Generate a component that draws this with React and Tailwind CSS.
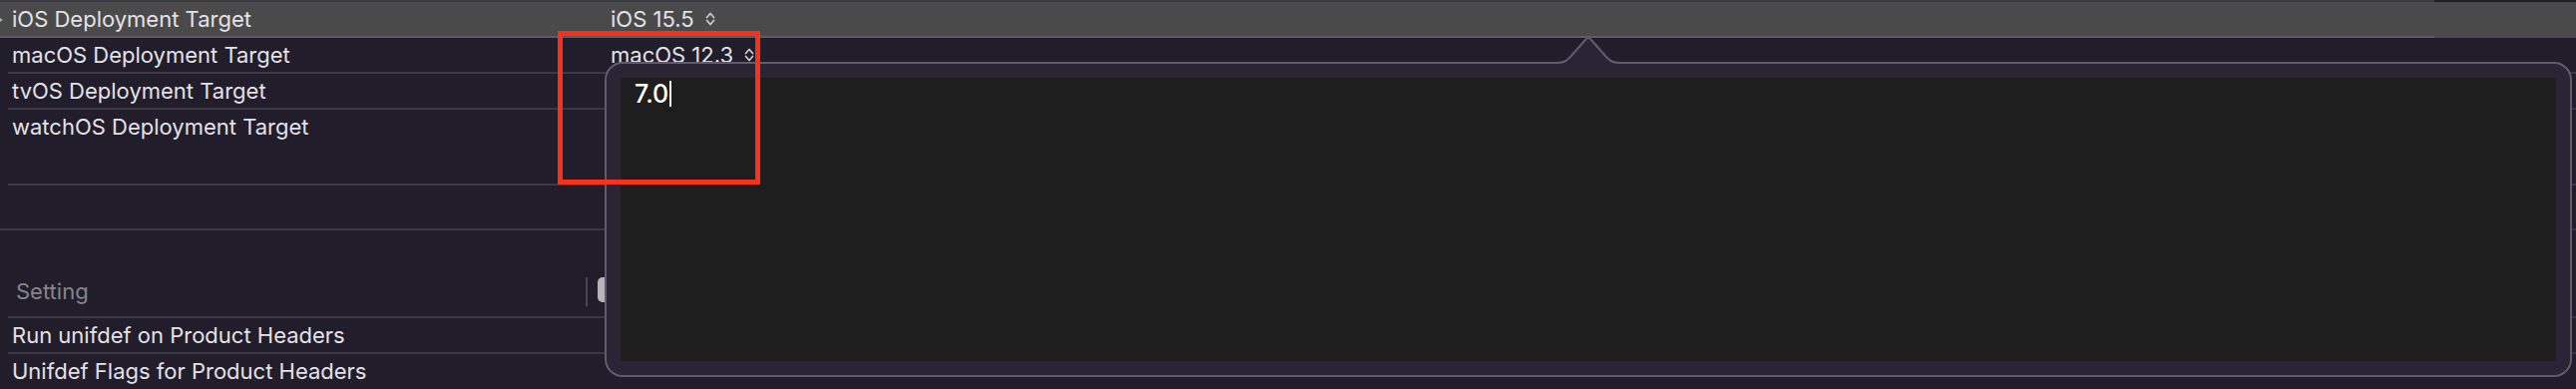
import React from "react";

const Chevrons = () => (
  <svg width="12" height="16" viewBox="0 0 12 16" className="ml-[10px]">
    <path
      d="M2.5 6.5 L6 2.5 L9.5 6.5 M2.5 9.5 L6 13.5 L9.5 9.5"
      fill="none"
      stroke="#cfcdd3"
      strokeWidth="1.7"
      strokeLinecap="round"
      strokeLinejoin="round"
    />
  </svg>
);

const Line = ({ full }) => (
  <div className={`h-[2px] bg-[#3b3844] ${full ? "" : "ml-2"}`} />
);

const Row = ({ label, value, className = "" }) => (
  <div className={`flex h-[34px] items-center pl-3 text-[22px] text-[#e4e2e8] ${className}`}>
    <span className="w-[600px] shrink-0">{label}</span>
    {value && (
      <span className="flex items-center">
        {value}
        <Chevrons />
      </span>
    )}
  </div>
);

const Popover = () => (
  <>
    {/* bubble */}
    <div className="absolute left-[606px] top-[62px] h-[316px] w-[1972px] rounded-[18px] border-2 border-[#615b6d] bg-[#2a2434] p-[14px]">
      <div className="h-full rounded-[2px] bg-[#1e1e1e] pl-[14px] pt-[2px]">
        <div className="flex items-center text-[25px] font-medium leading-[28px] text-white">
          <span>7.0</span>
          <span className="ml-[1px] inline-block h-[26px] w-[2px] bg-white" />
        </div>
      </div>
    </div>
    {/* pointer */}
    <svg
      width="64"
      height="30"
      viewBox="0 0 64 30"
      className="absolute left-[1560px] top-[36px]"
    >
      <path
        d="M0 27 C8 27 10 25 14 21 L29 4 Q32 0.5 35 4 L50 21 C54 25 56 27 64 27 L64 30 L0 30 Z"
        fill="#2a2434"
      />
      <path
        d="M0 27 C8 27 10 25 14 21 L29 4 Q32 0.5 35 4 L50 21 C54 25 56 27 64 27"
        fill="none"
        stroke="#615b6d"
        strokeWidth="2"
      />
    </svg>
  </>
);

export default function App() {
  return (
    <div className="relative h-[390px] w-[2582px] overflow-hidden bg-[#211d2a] font-['Inter',sans-serif]">
      <div className="flex h-[2px]">
        <div className="w-[2440px] bg-[#3d3b43]" />
        <div className="flex-1 bg-[#221f29]" />
      </div>

      <div className="relative bg-[#4a4a4a]">
        <svg width="4" height="8" viewBox="0 0 4 8" className="absolute left-0 top-[14px]">
          <path d="M-3 0 L3 4 L-3 8 Z" fill="#a9a7ae" />
        </svg>
        <Row label="iOS Deployment Target" value="iOS 15.5" className="h-[33px]" />
      </div>
      <div className="flex h-[2px]">
        <div className="w-[2440px] bg-[#5d5c63]" />
        <div className="flex-1 bg-[#4a4a4a]" />
      </div>

      <Row label="macOS Deployment Target" value="macOS 12.3" />
      <Line />
      <Row label="tvOS Deployment Target" />
      <Line />
      <Row label="watchOS Deployment Target" />
      <div className="h-[40px]" />
      <Line />
      <div className="h-[43px]" />
      <Line full />

      <div className="flex h-[86px] items-start pl-4 pt-[47px]">
        <span className="w-[571px] shrink-0 text-[22px] leading-[28px] text-[#87858c]">
          Setting
        </span>
        <div className="h-[29px] w-[2px] bg-[#48454f]" />
        <div className="ml-[10px] h-[25px] w-[30px] rounded-[5px] bg-[#b7b5bb]" />
      </div>
      <Line />
      <Row label="Run unifdef on Product Headers" />
      <Line />
      <Row label="Unifdef Flags for Product Headers" />

      <Popover />

      {/* annotation */}
      <div className="absolute left-[559px] top-[31px] h-[154px] w-[203px] border-[5px] border-[#f8321a]" />
    </div>
  );
}
